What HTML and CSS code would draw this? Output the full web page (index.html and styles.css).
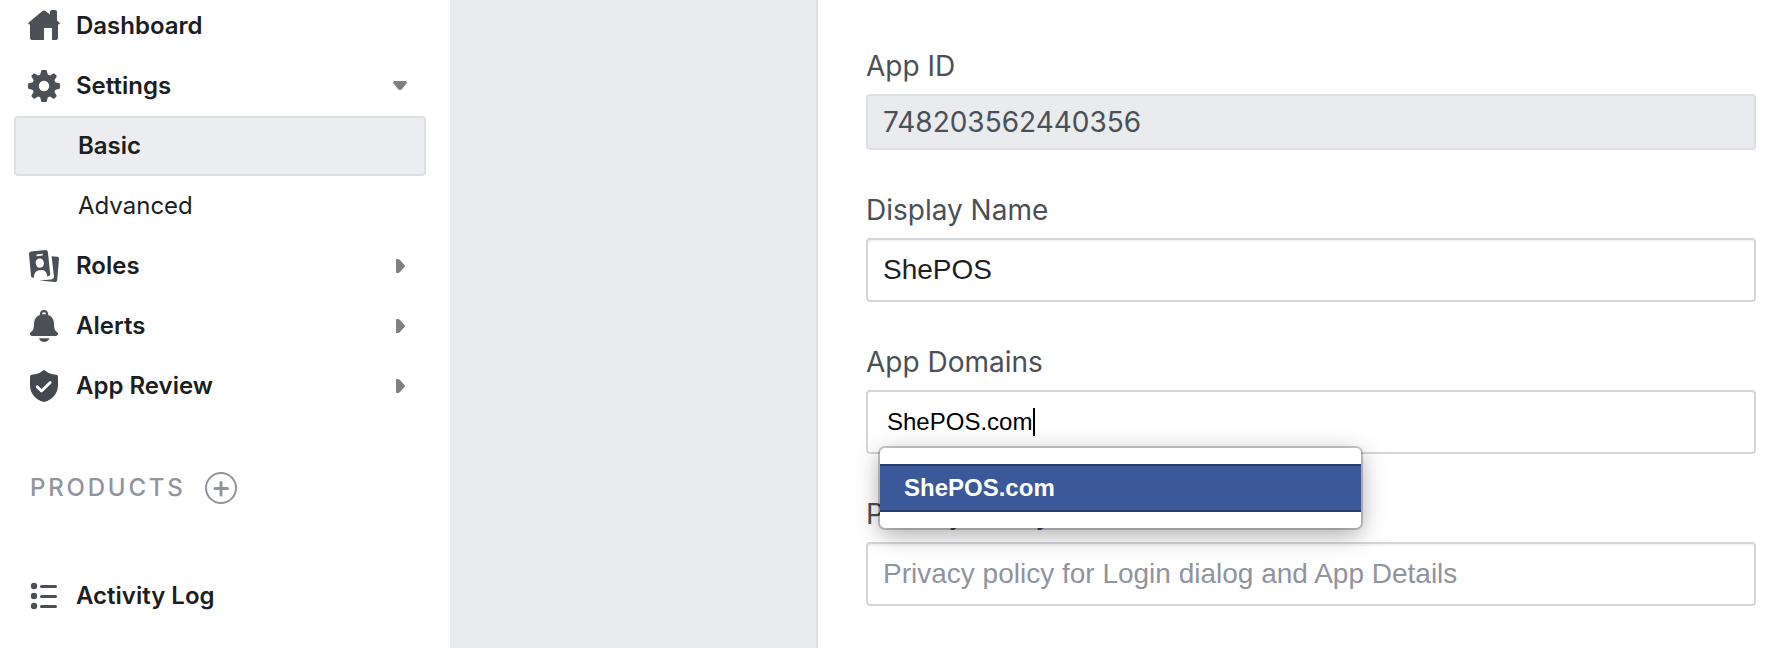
FILE: index.html
```html
<!DOCTYPE html>
<html lang="en">
<head>
<meta charset="utf-8">
<title>Basic settings</title>
<link rel="stylesheet" href="styles.css">
</head>
<body>
<div class="page">
  <nav class="sidebar">
    <a class="item"><svg class="icon" viewBox="0 0 32 32"><path d="M1 12.2 14.5 1q1.5-1 3 0L22 4.600V2q0-2 2-2h3q2 0 2 2v8.500l2.500 2.200q1 1.800-1.500 1.800V28q0 2-2 2h-4V18h-8v12H4q-2 0-2-2V14.500Q-1 14 1 12.200z"/></svg><span class="label dashboard">Dashboard</span></a>
    <a class="item"><svg class="icon" viewBox="0 0 32 32"><path fill-rule="evenodd" d="M13.500 0h5l1.400 4.800 2 .8L26 3.200 28.900 6l-2.400 4.200.8 2L32 13.500v5l-4.700 1.400-.8 2 2.400 4L26 28.900l-4.100-2.400-2 .8L18.500 32h-5l-1.400-4.700-2-.8L6 28.900 3.200 26l2.400-4.100-.8-2L0 18.500v-5l4.800-1.300.8-2L3.200 6 6 3.200l4.100 2.400 2-.8zM16 10.800a5.200 5.200 0 1 0 0 10.400 5.200 5.200 0 0 0 0-10.400z"/></svg><span class="label settings">Settings</span><svg class="arrow" viewBox="0 0 14 14"><path d="M1 2h12q1.500 1 .5 2.500L9 10q-2 2-4 0L.5 4.500Q-.5 3 1 2z"/></svg></a>
    <a class="item sub selected"><span class="label basic">Basic</span></a>
    <a class="item sub"><span class="label advanced">Advanced</span></a>
    <a class="item"><svg class="icon" viewBox="0 0 32 32"><path fill-rule="evenodd" d="M3 1.600 17.500.1q2.200 0 2.400 2L22.200 24q0 1.700-1.700 2.200l-1.200.2q-.8-6-5-6.400l-3.500.2q-5.100 1.200-4.700 7.400l-1.300.1q-1.500 0-1.800-1.800L1 4q0-2 2-2.400zM8.500 4.400v1.800l6.200-.6V3.800zM11.700 8.500c-2.400.1-4.200 2-4 4.700.2 2.600 2 4.600 4.300 4.500 2.500 0 4-2.200 3.900-4.700-.2-2.600-1.900-4.600-4.200-4.500z"/><path d="m23.600 6.200 6 .6q1.500.3 1.400 1.800l-1.800 21.600q-.3 2-2 1.800l-16-1.500 12-1q3-.5 2.700-3.500z"/></svg><span class="label roles">Roles</span><svg class="arrow" viewBox="0 0 14 14"><path d="M3 1q0-1.500 2-1 1 .2 2 1l4.500 5q1 1 0 2L7 13q-2 1.500-4 1z"/></svg></a>
    <a class="item"><svg class="icon" viewBox="0 0 32 32"><path fill-rule="evenodd" d="M12 4.800V4a4 4 0 0 1 8 0v.8c4 1.500 6 5 6 9.200 0 5 1 6.500 3.300 8.300 1.500 1.700.5 3.700-1.300 3.700H4c-1.800 0-2.800-2-1.300-3.700C5 20.500 6 19 6 14c0-4.200 2-7.700 6-9.200zm2-.6h4a2 2 0 0 0-4 0z"/><path d="M11 28.300h10.300c-.8 2.500-2.600 3.700-5.100 3.700S12 30.800 11 28.300z"/></svg><span class="label alerts">Alerts</span><svg class="arrow" viewBox="0 0 14 14"><path d="M3 1q0-1.500 2-1 1 .2 2 1l4.500 5q1 1 0 2L7 13q-2 1.500-4 1z"/></svg></a>
    <a class="item"><svg class="icon shield" viewBox="0 0 32 32"><path d="M15 .4q1-.8 2 0 4.500 3.700 11 4.300 2 .2 2 2V15c0 8-5 14.500-13 16.800q-1 .3-2 0C7 29.500 2 23 2 15V6.700q0-1.800 2-2Q10.500 4.100 15 .4z"/><path class="check" d="m9.200 16.800 4.300 4.200 8.700-8.600"/></svg><span class="label review">App Review</span><svg class="arrow" viewBox="0 0 14 14"><path d="M3 1q0-1.500 2-1 1 .2 2 1l4.500 5q1 1 0 2L7 13q-2 1.500-4 1z"/></svg></a>
    <div class="item products"><span class="heading">PRODUCTS</span><svg class="plus" viewBox="0 0 32 32"><circle cx="16" cy="16" r="15"/><path d="M10 16.500h12.500M16 10.500v12.500"/></svg></div>
    <a class="item activity"><svg class="icon list" viewBox="0 0 32 32"><circle cx="6" cy="6" r="3.200"/><circle cx="6" cy="16" r="3.200"/><circle cx="6" cy="26" r="3.200"/><path d="M13.500 6.500h14M13.500 16.500h14M13.500 26.500h14"/></svg><span class="label log">Activity Log</span></a>
  </nav>
  <div class="gutter"></div>
  <main class="form">
    <div class="field readonly"><span class="caption cap-id">App ID</span><div class="box"><span class="number">748203562440356</span></div></div>
    <div class="field"><span class="caption cap-name">Display Name</span><div class="box"><span class="helv">ShePOS</span></div></div>
    <div class="field"><span class="caption cap-domains">App Domains</span><div class="box typing"><span class="typed">ShePOS.com</span><i class="caret"></i>
      <div class="popup"><div class="option"><span class="opt-text">ShePOS.com</span></div></div></div></div>
    <div class="field"><span class="caption cap-privacy">Privacy Policy URL</span><div class="box"><span class="helv placeholder">Privacy policy for Login dialog and App Details</span></div></div>
  </main>
</div>
</body>
</html>
```
FILE: styles.css
```css
* { box-sizing: border-box; }
body { margin: 0; background: #fff; font-family: Inter, sans-serif; color: #1c1e21; }
.page { display: flex; width: 1774px; height: 648px; overflow: hidden; }
.sidebar { width: 450px; flex: none; padding: 0 24px 0 14px; margin-top: -4px; }
.item { display: flex; align-items: center; height: 60px; padding: 0 19px 0 14px; font-size: 24px; font-weight: 600; line-height: 30px; white-space: nowrap; }
.icon { width: 32px; height: 32px; margin-right: 16px; fill: #4b4f56; flex: none; }
.shield { fill: #444950; }
.check { fill: none; stroke: #fff; stroke-width: 2.800; stroke-linecap: round; stroke-linejoin: round; }
.list path { stroke: #4b4f56; stroke-width: 3; stroke-linecap: round; }
.arrow { width: 14px; height: 14px; margin-left: auto; fill: #808080; }
.sub { padding-left: 64px; font-weight: 400; }
.selected { padding-left: 62px; border: 2px solid #dddfe2; border-radius: 4px; background: #ebedf0; font-weight: 600; }
.products { margin-top: 42px; padding-left: 16px; color: #90949c; }
.heading { letter-spacing: 2.800px; font-weight: 500; }
.plus { width: 32px; height: 32px; margin-left: 19px; fill: none; stroke: #90949c; stroke-width: 2; }
.plus path { stroke-width: 3; stroke-linecap: round; }
.activity { margin-top: 48px; }
.gutter { width: 368px; flex: none; background: #e9ebee; border-right: 2px solid #dddfe2; }
.form { flex: 1; padding: 38px 18px 0 48px; }
.field { display: flex; flex-direction: column; height: 152px; }
.readonly { height: 144px; }
.caption { height: 56px; line-height: 56px; font-size: 28px; color: #4b4f56; white-space: nowrap; }
.box { position: relative; display: flex; align-items: center; height: 64px; padding: 0 15px; border: 2px solid #d4d5da; border-radius: 4px; box-shadow: inset 0 2px 0 #f5f5f5; font-size: 28px; white-space: nowrap; }
.readonly .box { height: 56px; border-color: #dddfe2; background: #e9ebee; box-shadow: none; color: #4b4f56; }
.helv, .typed, .opt-text { font-family: "Liberation Sans", Arial, sans-serif; }
.placeholder { color: #90949c; }
.typing { padding-left: 19px; box-shadow: none; font-size: 24px; color: #000; }
.caret { width: 2px; height: 28px; margin-left: 1px; background: #000; }
.popup { position: absolute; left: 12px; top: 56px; z-index: 1; width: 481px; height: 80px; padding: 16px 0; background: #fff; border-radius: 5px; box-shadow: 0 0 0 2px rgba(0,0,0,.2), 0 6px 24px rgba(0,0,0,.35); }
.option { display: flex; align-items: center; height: 48px; padding-left: 24px; border: solid #283e6c; border-width: 2px 0; background: #3b5998; color: #fff; font-weight: 700; }
```
